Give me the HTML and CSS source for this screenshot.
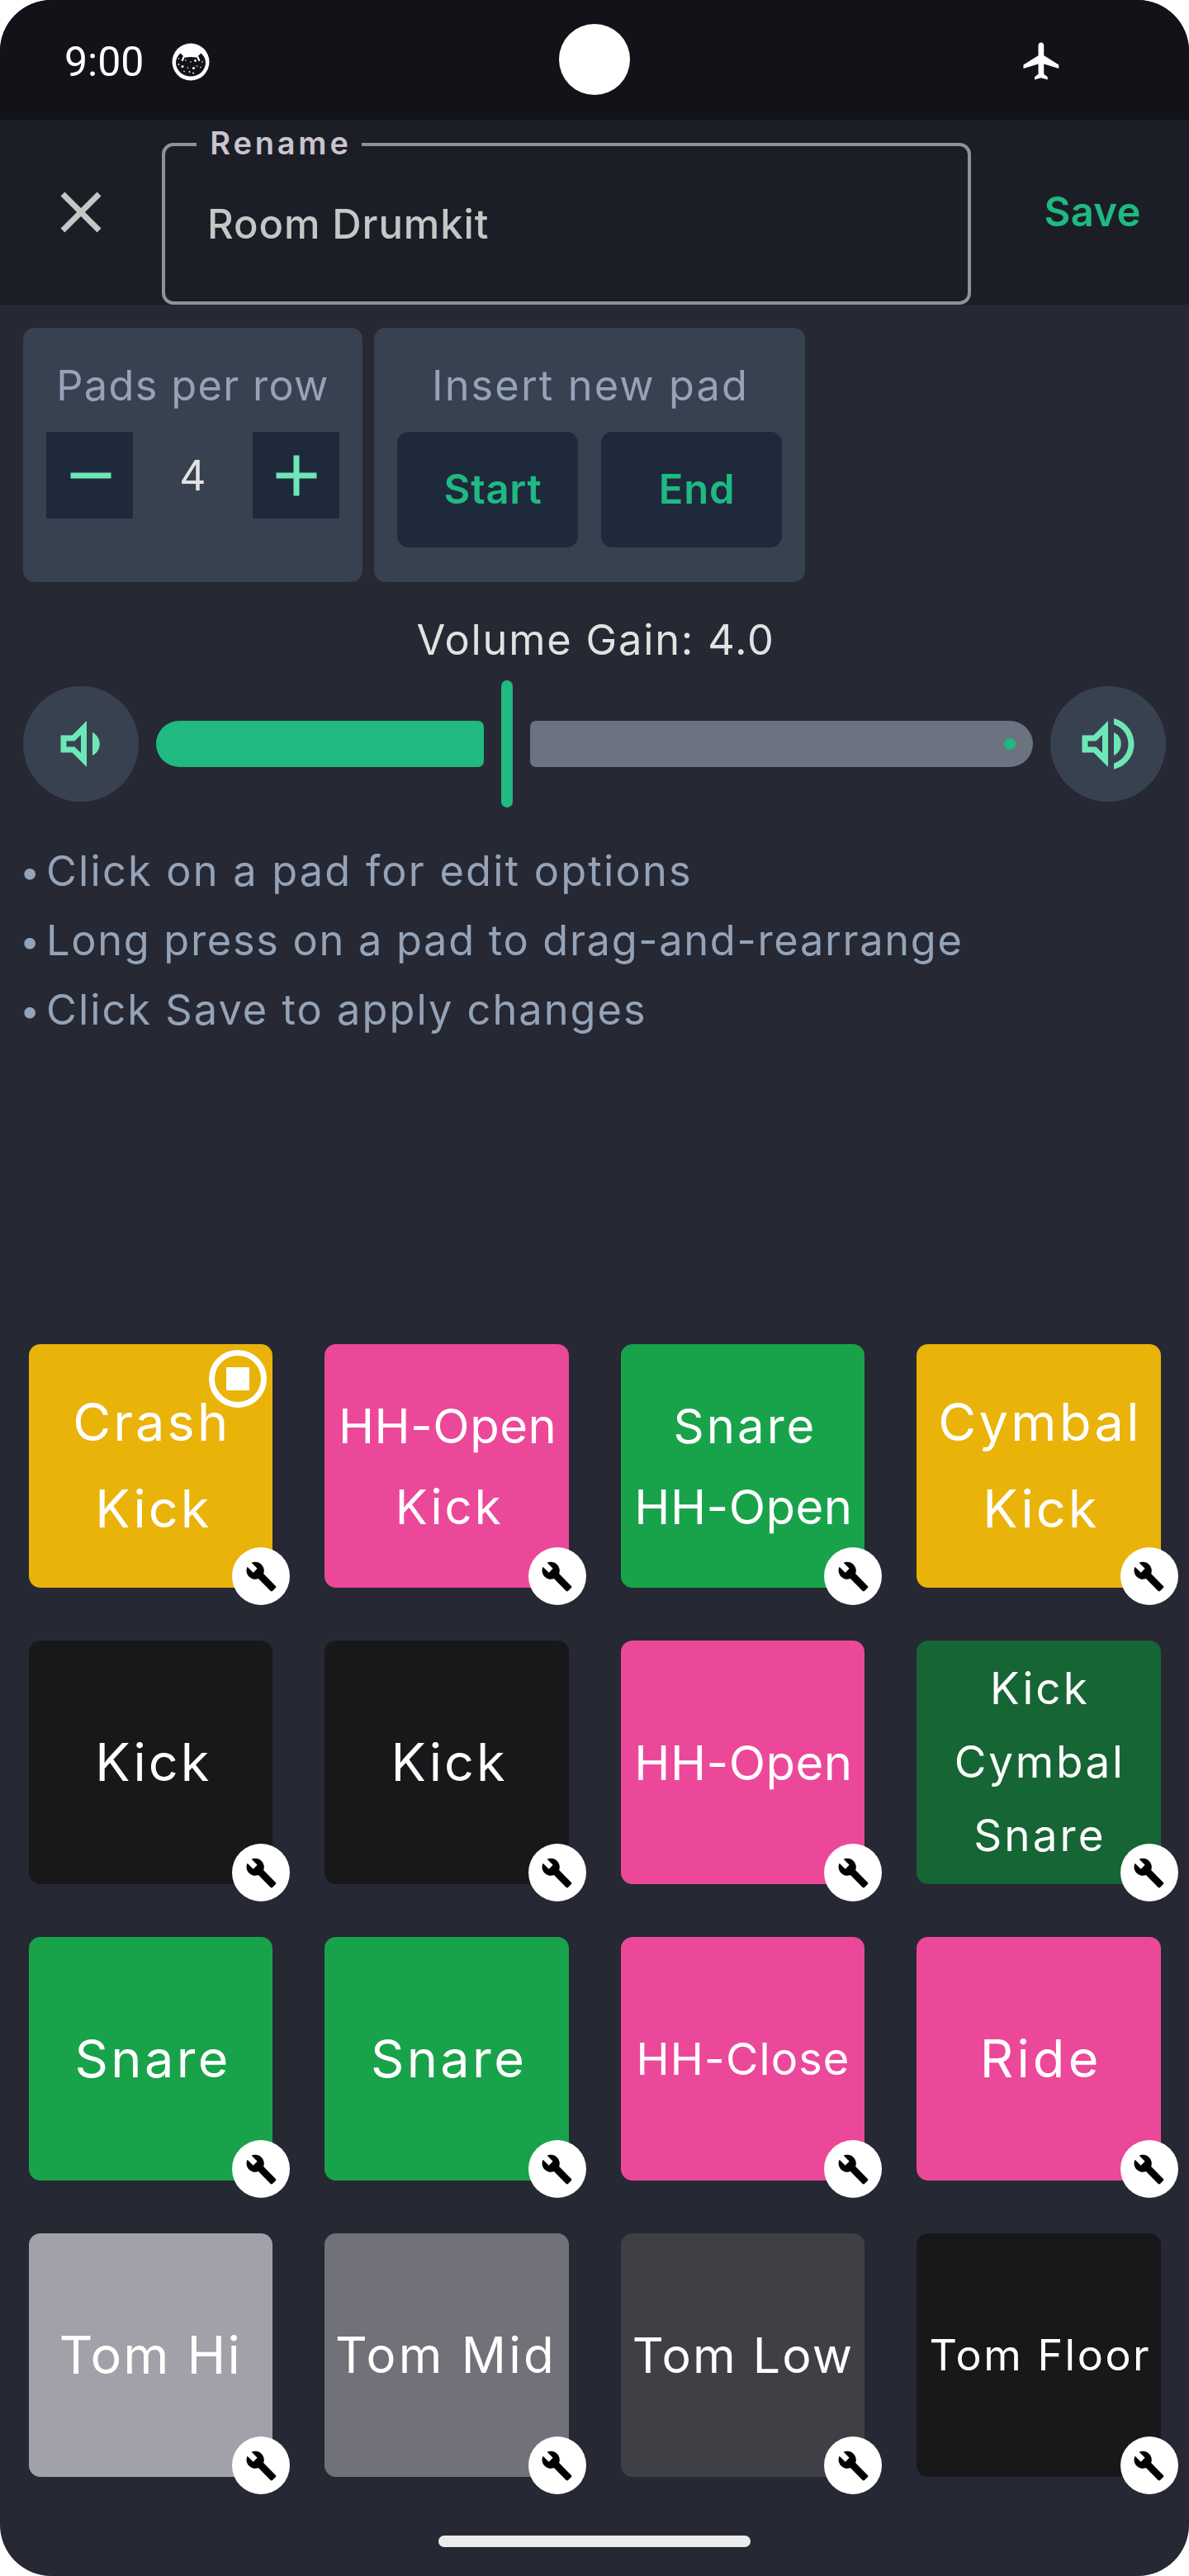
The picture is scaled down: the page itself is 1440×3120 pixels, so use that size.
FILE: index.html
```html
<!DOCTYPE html>
<html lang="en">
<head>
<meta charset="utf-8">
<title>Edit drumkit</title>
<link rel="stylesheet" href="styles.css">
</head>
<body>
<svg width="0" height="0" class="defs" aria-hidden="true">
  <symbol id="wrench" viewBox="0 0 24 24"><path d="M22.7 19l-9.1-9.1c.9-2.3.4-5-1.5-6.9-2-2-5-2.4-7.4-1.3L9 6 6 9 1.6 4.7C.4 7.1.9 10.1 2.9 12.1c1.9 1.9 4.6 2.4 6.9 1.5l9.1 9.1c.4.4 1 .4 1.4 0l2.3-2.3c.5-.4.5-1.1.1-1.4z"/></symbol>
</svg>
<div class="screen">
  <header class="status">
    <span class="clock">9:00</span>
    <svg class="cat" viewBox="0 0 46 46">
      <circle cx="23" cy="23" r="22.5" fill="#fff"/>
      <path fill="#121318" d="M10.5 12.5l5.5 5.2q7-1.6 14 0l5.500-5.200q5.500 5 5.500 11.500a18 16.500 0 0 1-36 0q0-6.500 5.500-11.500z"/>
      <path stroke="#fff" stroke-width="2.200" stroke-linecap="round" d="M14.800 16.500l-2 4.500M31.200 16.500l2 4.500"/>
      <g fill="#fff"><circle cx="8.500" cy="19" r=".8"/><circle cx="17" cy="21" r=".8"/><circle cx="23" cy="23" r=".8"/><circle cx="28.500" cy="21.500" r="1.400"/><circle cx="37" cy="23" r=".8"/><circle cx="8.500" cy="26" r=".9"/><circle cx="13" cy="28.500" r="1.500"/><circle cx="19.500" cy="30" r=".8"/><circle cx="26.500" cy="30.500" r="1.500"/><circle cx="30.500" cy="28" r=".8"/><circle cx="35" cy="29.500" r=".8"/><circle cx="15" cy="34.500" r=".8"/><circle cx="21.500" cy="35" r=".9"/><circle cx="26" cy="36.500" r=".9"/></g>
    </svg>
    <span class="camera"></span>
    <svg class="plane" viewBox="0 0 24 24" fill="#fff"><path d="M21 16v-2l-8-5V3.500c0-.83-.67-1.500-1.500-1.500S10 2.670 10 3.500V9l-8 5v2l8-2.500V19l-2 1.500V22l3.500-1 3.500 1v-1.500L13 19v-5.500l8 2.500z"/></svg>
  </header>

  <div class="appbar">
    <svg class="close" viewBox="0 0 24 24" fill="#c4c7c5"><path d="M19 6.410L17.590 5 12 10.590 6.410 5 5 6.410 10.590 12 5 17.590 6.410 19 12 13.410 17.590 19 19 17.590 13.410 12z"/></svg>
    <div class="field"><span class="label">Rename</span><span class="value">Room Drumkit</span></div>
    <span class="save">Save</span>
  </div>

  <main class="content">
    <div class="cards">
      <section class="card rows">
        <h2 class="t-rows">Pads per row</h2>
        <div class="stepper">
          <span class="step"><svg viewBox="0 0 24 24"><path d="M19 13H5v-2h14z"/></svg></span>
          <span class="count">4</span>
          <span class="step"><svg viewBox="0 0 24 24"><path d="M19 13h-6v6h-2v-6H5v-2h6V5h2v6h6z"/></svg></span>
        </div>
      </section>
      <section class="card insert">
        <h2 class="t-insert">Insert new pad</h2>
        <div class="buttons"><span class="btn">Start</span><span class="btn">End</span></div>
      </section>
    </div>

    <div class="gain">Volume Gain: 4.0</div>
    <div class="volume">
      <span class="round"><svg viewBox="0 0 24 24"><path d="M16 7.970v8.050c1.480-.73 2.500-2.250 2.500-4.020 0-1.770-1.020-3.290-2.500-4.030zM5 9v6h4l5 5V4L9 9H5zm7-.17v6.340L9.830 13H7v-2h2.830L12 8.830z"/></svg></span>
      <div class="slider"><span class="active"></span><span class="thumb"></span><span class="rest"><i></i></span></div>
      <span class="round"><svg viewBox="0 0 24 24"><path d="M3 9v6h4l5 5V4L7 9H3zm7-.17v6.340L7.830 13H5v-2h2.830L10 8.830zM16.500 12A4.500 4.500 0 0 0 14 7.970v8.050c1.480-.73 2.500-2.250 2.500-4.020zM14 3.230v2.060c2.890.86 5 3.540 5 6.710s-2.110 5.850-5 6.710v2.060c4.010-.91 7-4.490 7-8.770s-2.990-7.860-7-8.770z"/></svg></span>
    </div>

    <ul class="tips">
      <li><b>•</b><span class="tip1">Click on a pad for edit options</span></li>
      <li><b>•</b><span class="tip2">Long press on a pad to drag-and-rearrange</span></li>
      <li><b>•</b><span class="tip3">Click Save to apply changes</span></li>
    </ul>

    <div class="pads">
      <div class="pad yellow"><span class="crash">Crash</span><span class="kick">Kick</span><i class="stop"></i><i class="edit"><svg><use href="#wrench"/></svg></i></div>
      <div class="pad pink mid"><span class="hho">HH-Open</span><span class="kick">Kick</span><i class="edit"><svg><use href="#wrench"/></svg></i></div>
      <div class="pad green mid"><span class="kick">Snare</span><span class="hho">HH-Open</span><i class="edit"><svg><use href="#wrench"/></svg></i></div>
      <div class="pad yellow"><span class="cymbal">Cymbal</span><span class="kick">Kick</span><i class="edit"><svg><use href="#wrench"/></svg></i></div>

      <div class="pad black"><span class="kick">Kick</span><i class="edit"><svg><use href="#wrench"/></svg></i></div>
      <div class="pad black"><span class="kick">Kick</span><i class="edit"><svg><use href="#wrench"/></svg></i></div>
      <div class="pad pink mid"><span class="hho">HH-Open</span><i class="edit"><svg><use href="#wrench"/></svg></i></div>
      <div class="pad forest small"><span class="s3">Kick</span><span class="s3c">Cymbal</span><span class="s3">Snare</span><i class="edit"><svg><use href="#wrench"/></svg></i></div>

      <div class="pad green"><span class="snare">Snare</span><i class="edit"><svg><use href="#wrench"/></svg></i></div>
      <div class="pad green"><span class="snare">Snare</span><i class="edit"><svg><use href="#wrench"/></svg></i></div>
      <div class="pad pink"><span class="hhc">HH-Close</span><i class="edit"><svg><use href="#wrench"/></svg></i></div>
      <div class="pad pink"><span class="ride">Ride</span><i class="edit"><svg><use href="#wrench"/></svg></i></div>

      <div class="pad zinc4"><span class="tomhi">Tom Hi</span><i class="edit"><svg><use href="#wrench"/></svg></i></div>
      <div class="pad zinc5"><span class="tommid">Tom Mid</span><i class="edit"><svg><use href="#wrench"/></svg></i></div>
      <div class="pad zinc7"><span class="tomlow">Tom Low</span><i class="edit"><svg><use href="#wrench"/></svg></i></div>
      <div class="pad black"><span class="tomfloor">Tom Floor</span><i class="edit"><svg><use href="#wrench"/></svg></i></div>
    </div>
  </main>
  <footer class="home"><span></span></footer>
</div>
</body>
</html>
```
FILE: styles.css
```css
* { box-sizing: border-box; }
body { margin: 0; background: #fff; font-family: Inter, "Liberation Sans", sans-serif; }
.defs { display: none; }
i { font-style: normal; }
.screen {
  width: 1440px; height: 3120px; border-radius: 62px; overflow: hidden;
  background: #262833; display: flex; flex-direction: column; white-space: nowrap;
}

/* system status bar */
.status {
  position: relative; height: 145px; flex: none; background: #121318;
  display: flex; align-items: center; padding: 4px 151px 0 78px;
}
.clock { color: #fff; font: 50px/60px Roboto, sans-serif; width: 130px; }
.cat { width: 46px; height: 46px; }
.camera { position: absolute; left: 677px; top: 29px; width: 86px; height: 86px; border-radius: 50%; background: #fff; }
.plane { width: 54px; height: 54px; margin: 0 0 2px auto; }

/* top app bar */
.appbar { height: 224px; flex: none; background: #1b1e26; display: flex; padding-right: 58px; }
.close { width: 84px; height: 84px; margin: 70px 56px 0; }
.field {
  position: relative; width: 980px; height: 196px; margin-top: 28px;
  border: 4px solid #938f99; border-radius: 14px; padding-left: 51px;
  display: flex; align-items: center;
}
.label {
  position: absolute; left: 38px; top: -26px; width: 200px; height: 44px;
  background: #1b1e26; color: #cac4d0; text-align: center;
  font-size: 38px; font-weight: 600; line-height: 44px; letter-spacing: 3.8px; text-indent: 4px;
}
.value { color: #c4c7c5; font-size: 49px; font-weight: 500; letter-spacing: .9px; }
.save { margin: 70px 0 0 auto; color: #1fb981; font-size: 49px; font-weight: 600; line-height: 84px; letter-spacing: .4px; }

/* cards */
.content { flex: 1; display: flex; flex-direction: column; padding-top: 28px; }
.cards { display: flex; gap: 14px; padding: 0 28px; height: 308px; }
.card { background: #384150; border-radius: 14px; padding: 28px; }
.rows { width: 411px; }
.insert { width: 522px; }
h2 { margin: 0 -20px 14px; font-size: 50.5px; font-weight: 400; line-height: 84px; color: #94a3b8; text-align: center; }
.t-rows { letter-spacing: 1.3px; }
.t-insert { letter-spacing: 2.1px; text-indent: 2px; }
.stepper { display: flex; justify-content: space-between; align-items: center; }
.step { width: 105px; height: 105px; background: #1e293b; display: flex; align-items: center; justify-content: center; }
.step svg { width: 84px; height: 84px; fill: #6ee7b7; }
.count { color: #e1e3e1; font-size: 50px; }
.stepper .step:first-child svg { margin-left: 2px; }
.buttons { display: flex; gap: 28px; }
.btn {
  width: 219px; height: 140px; border-radius: 14px; background: #1e293b; color: #1fb981;
  font-size: 49px; font-weight: 600; line-height: 139px; letter-spacing: .75px; text-align: center; padding-left: 13px;
}

/* volume */
.gain { margin-top: 28px; height: 84px; line-height: 84px; text-align: center; color: #e1e3e1; font-size: 50.5px; letter-spacing: 1.8px; text-indent: 3px; }
.volume { margin-top: 7px; height: 154px; padding: 0 28px; display: flex; align-items: center; }
.round { width: 140px; height: 140px; border-radius: 50%; background: #384150; display: flex; align-items: center; justify-content: center; }
.round svg { width: 84px; height: 84px; fill: #6ee7b7; }
.slider { flex: 1; margin: 0 21px; display: flex; align-items: center; gap: 21px; }
.active { width: 397px; height: 56px; background: #1fb981; border-radius: 28px 7px 7px 28px; }
.thumb { width: 14px; height: 154px; background: #1fb981; border-radius: 7px; }
.rest { flex: 1; height: 56px; background: #6b7280; border-radius: 7px 28px 28px 7px; display: flex; align-items: center; justify-content: flex-end; padding-right: 21px; }
.rest i { width: 14px; height: 14px; border-radius: 50%; background: #1fb981; }

.tips { list-style: none; margin: 35px 0 0; padding: 0 28px; color: #94a3b8; font-size: 50.5px; line-height: 84px; }
.tips li { display: flex; height: 84px; }
.tips b { width: 28px; font-weight: 400; font-size: 43px; text-indent: -4px; }
.tip1 { letter-spacing: 2.2px; }
.tip2 { letter-spacing: 1.7px; }
.tip3 { letter-spacing: 2.03px; }

/* pad grid */
.pads {
  margin-top: auto; padding: 0 35px;
  display: grid; grid-template-columns: repeat(4, 295.4px); grid-auto-rows: 295.5px; gap: 63.5px 63px;
}
.pad {
  position: relative; border-radius: 14px; color: #fff; font-size: 63px; line-height: 105px;
  display: flex; flex-direction: column; align-items: center; justify-content: center;
}
.mid { font-size: 58px; line-height: 98px; padding-top: 2px; }
.small { font-size: 53px; line-height: 89px; padding-top: 1px; }
.yellow { background: #e9b30a; }
.pink { background: #ec4899; }
.green { background: #18a34a; }
.forest { background: #166534; }
.black { background: #18181b; }
.zinc4 { background: #a1a1aa; }
.zinc5 { background: #71717a; }
.zinc7 { background: #3f3f46; }
.crash { letter-spacing: 3.1px; margin-right: -2px; }
.kick { letter-spacing: 3px; margin-right: -6px; }
.hho { letter-spacing: .5px; margin-right: -2px; }
.cymbal { letter-spacing: 3.4px; margin-right: -3.4px; }
.s3 { letter-spacing: 3.1px; margin-right: -3.1px; }
.s3c { letter-spacing: 2.7px; margin-right: -2.7px; }
.snare { letter-spacing: 3.4px; margin-right: -5px; }
.ride { letter-spacing: 4.2px; margin-right: -5.5px; }
.hhc { font-size: 54px; letter-spacing: 1.1px; margin-right: -1px; }
.tomhi { letter-spacing: 2.1px; margin-right: 1px; }
.tommid { font-size: 60px; letter-spacing: 3.3px; margin-right: 2px; }
.tomlow { font-size: 59px; letter-spacing: 2.2px; margin-right: -1px; }
.tomfloor { font-size: 52px; letter-spacing: 2.5px; margin-right: -4px; }
.edit {
  position: absolute; right: -21px; bottom: -21px; width: 70px; height: 70px; border-radius: 50%;
  background: #fff; display: flex; align-items: center; justify-content: center;
}
.edit svg { width: 39px; height: 39px; fill: #000; }
.stop {
  position: absolute; right: 7px; top: 7px; width: 70px; height: 70px; border-radius: 50%;
  border: 7px solid #fff; display: flex; align-items: center; justify-content: center;
}
.stop::before { content: ""; width: 28px; height: 28px; background: #fff; }

/* gesture bar */
.home { height: 120px; flex: none; display: flex; justify-content: center; padding-top: 71px; }
.home span { width: 378px; height: 14px; border-radius: 7px; background: #ececec; }
```
